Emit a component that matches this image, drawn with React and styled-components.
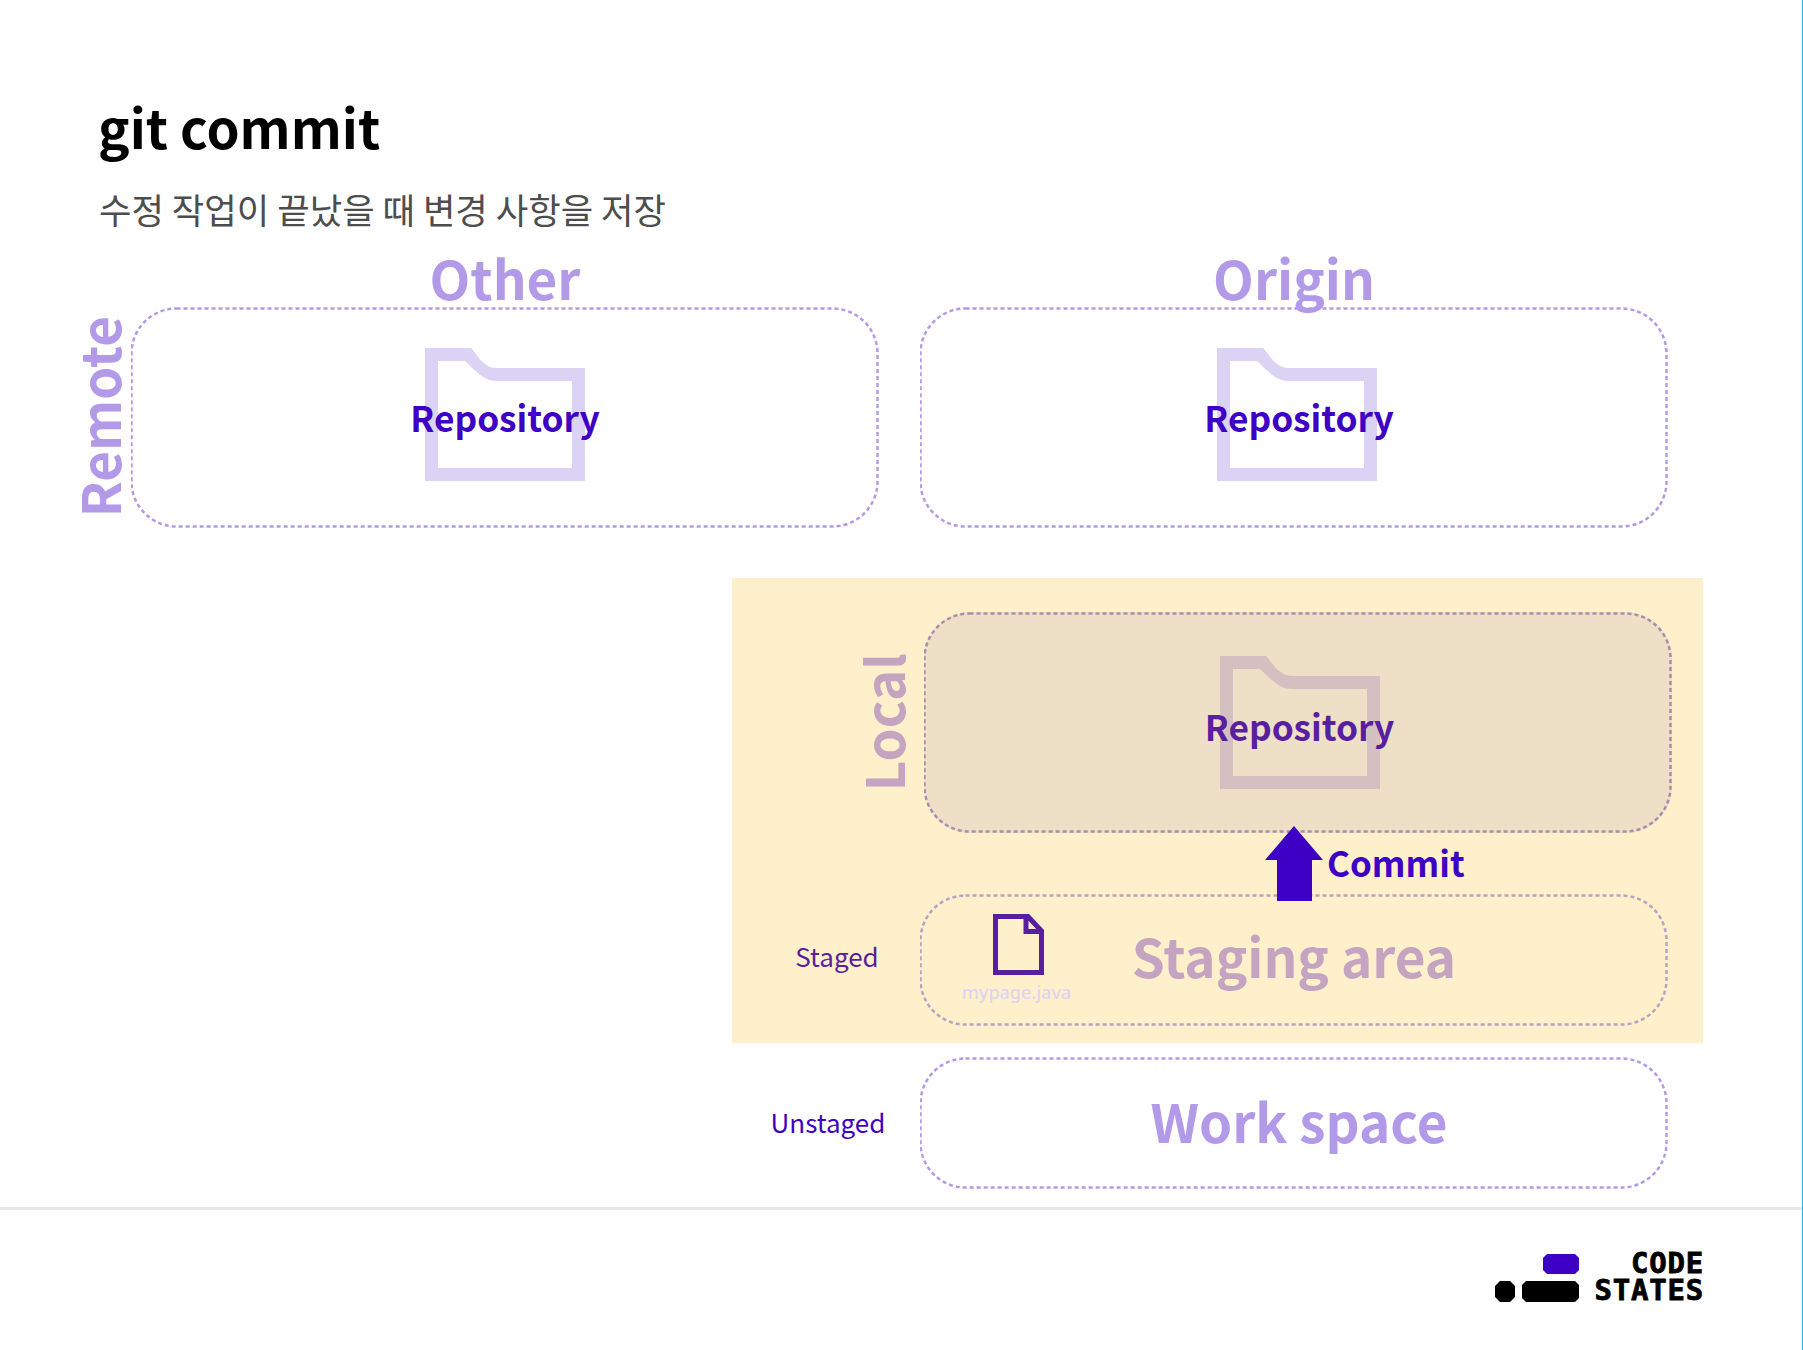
import React from "react"
import styled, { createGlobalStyle } from 'styled-components'

const purple = '#3d00c4'
const lilac = '#b29ae8'
const staged = '#5a1fa0'
const mauve = '#c4a4c0'

const GlobalStyle = createGlobalStyle`
  html, body {
    margin: 0;
    padding: 0;
    background: #fff;
  }
  body {
    font-family: "Noto Sans CJK KR", "Noto Sans", sans-serif;
  }
`

const Folder = ({ color, $lift }) => (
  <FolderIcon $lift={$lift} width="160" height="133" viewBox="0 0 160 133">
    <path
      fill={color}
      fillRule="evenodd"
      d="M0 0H46C52 6 58 20 72 20H160V133H0ZM13 13V120H147V33H72C58 33 50 22 40 13Z"
    />
  </FolderIcon>
)

const FileIcon = () => (
  <svg width="51" height="61" viewBox="0 0 51 61">
    <path
      fill="none"
      stroke={staged}
      strokeWidth="5"
      d="M2.5 2.5H35L48.5 17V58.5H2.5ZM33 3V17.5H48"
    />
  </svg>
)

const Arrow = () => (
  <ArrowIcon width="58" height="75" viewBox="0 0 58 75">
    <path fill={purple} d="M29 0L58 34H47V75H12V34H0Z" />
  </ArrowIcon>
)

const Dashes = ({ color }) => (
  <DashFrame>
    <DashRect rx="45" fill="none" stroke={color} strokeWidth="2.5" strokeDasharray="4 3" x="0.5" y="1.5" />
  </DashFrame>
)

const Logo = () => (
  <LogoWrap>
    <LogoMark width="84" height="49" viewBox="0 0 84 49">
      <path fill={purple} d="M52 0H80L84 4V16L80 20H52L48 16V4Z" />
      <path fill="#000" d="M5 27H15L20 32V43L15 48H5L0 43V32Z" />
      <path fill="#000" d="M31 27H80L84 31V44L80 48H31L27 44V31Z" />
    </LogoMark>
    <LogoText>
      <span>CODE</span>
      <span>STATES</span>
    </LogoText>
  </LogoWrap>
)

const App = () => (
  <Page>
    <GlobalStyle />
    <Slide>
      <Title>git commit</Title>
      <Subtitle>수정 작업이 끝났을 때 변경 사항을 저장</Subtitle>

      <RemoteRow>
        <SideLabel>Remote</SideLabel>
        <RemoteColumn>
          <ColumnTitle>Other</ColumnTitle>
          <RepoBox>
            <Dashes color={lilac} />
            <Folder color="#dad3f4" $lift />
            <RepoName>Repository</RepoName>
          </RepoBox>
        </RemoteColumn>
        <RemoteColumn>
          <ColumnTitle>Origin</ColumnTitle>
          <RepoBox $folderShift={6}>
            <Dashes color={lilac} />
            <Folder color="#dad3f4" $lift />
            <RepoName $shift={10}>Repository</RepoName>
          </RepoBox>
        </RemoteColumn>
      </RemoteRow>

      <LocalPanel>
        <LocalRow>
          <SideLabel $local>Local</SideLabel>
          <RepoBox $local $folderShift={4}>
            <Dashes color="#a68fae" />
            <Folder color="#d4c0c0" />
            <RepoName $local $shift={3}>Repository</RepoName>
          </RepoBox>
        </LocalRow>
        <CommitGap>
          <Arrow />
          <CommitLabel>Commit</CommitLabel>
        </CommitGap>
        <AreaRow>
          <AreaLabel $local>Staged</AreaLabel>
          <AreaBox>
            <Dashes color="#b9a0c4" />
            <FileItem>
              <FileIcon />
              <FileName>mypage.java</FileName>
            </FileItem>
            <AreaName $local>Staging area</AreaName>
          </AreaBox>
        </AreaRow>
      </LocalPanel>

      <WorkRow>
        <AreaLabel>Unstaged</AreaLabel>
        <AreaBox>
          <Dashes color={lilac} />
          <AreaName>Work space</AreaName>
        </AreaBox>
      </WorkRow>
    </Slide>
    <Footer>
      <Logo />
    </Footer>
  </Page>
)

const Page = styled.div`
  width: 1802px;
  height: 1350px;
  border-right: 1px solid #1cb4f0;
  display: flex;
  flex-direction: column;
  overflow: hidden;
`

const Slide = styled.main`
  height: 1207px;
  box-sizing: border-box;
  padding-top: 86px;
`

const Title = styled.h1`
  margin: 0 0 0 98px;
  font-size: 53px;
  line-height: 80px;
  font-weight: 700;
  color: #000;
`

const Subtitle = styled.p`
  margin: 18px 0 0 99px;
  font-size: 35.3px;
  line-height: 50px;
  font-weight: 400;
  color: #4d4d4d;
`

const RemoteRow = styled.section`
  display: flex;
  gap: 41px;
  padding-left: 131px;
  position: relative;
  margin-top: 8px;
`

const SideLabel = styled.div`
  position: absolute;
  left: ${p => (p.$local ? '122px' : '70px')};
  bottom: ${p => (p.$local ? '42px' : '11px')};
  writing-mode: vertical-rl;
  transform: rotate(180deg);
  font-size: 53px;
  line-height: 56px;
  font-weight: 700;
  color: ${p => (p.$local ? mauve : lilac)};
`

const RemoteColumn = styled.div`
  width: 748px;
  display: flex;
  flex-direction: column;
`

const ColumnTitle = styled.h2`
  margin: 0 0 -5px;
  text-align: center;
  font-size: 53px;
  line-height: 70px;
  font-weight: 700;
  color: ${lilac};
`

const RepoBox = styled.div`
  width: 748px;
  height: 221px;
  border-radius: 46px;
  background: ${p => (p.$local ? '#eedfc7' : 'transparent')};
  position: relative;
  display: flex;
  align-items: center;
  justify-content: center;
  box-sizing: border-box;
  padding-left: ${p => p.$folderShift || 0}px;
`

const DashFrame = styled.svg`
  position: absolute;
  inset: 0;
  width: 100%;
  height: 100%;
  pointer-events: none;
`

const DashRect = styled.rect`
  width: calc(100% - 2px);
  height: calc(100% - 3px);
`

const FolderIcon = styled.svg`
  display: block;
  margin-top: ${p => (p.$lift ? '-7px' : '0')};
`

const RepoName = styled.span`
  position: absolute;
  left: 0;
  right: 0;
  top: 50%;
  margin-top: ${p => (p.$local ? '-23px' : '-27px')};
  padding-left: ${p => p.$shift || 0}px;
  text-align: center;
  font-size: 35.3px;
  line-height: 52px;
  font-weight: 700;
  color: ${p => (p.$local ? staged : purple)};
`

const LocalPanel = styled.section`
  position: relative;
  margin: 50px 0 0 732px;
  width: 971px;
  height: 465px;
  box-sizing: border-box;
  padding-top: 34px;
  background: #fff0cc;
`

const LocalRow = styled.div`
  position: relative;
  padding-left: 192px;
`

const CommitGap = styled.div`
  position: relative;
  height: 61px;
`

const ArrowIcon = styled.svg`
  position: absolute;
  left: 533px;
  top: -7px;
  z-index: 2;
`

const CommitLabel = styled.span`
  position: absolute;
  left: 595px;
  top: 3px;
  font-size: 35px;
  line-height: 52px;
  font-weight: 700;
  color: ${purple};
`

const AreaRow = styled.div`
  display: flex;
  align-items: center;
`

const WorkRow = styled(AreaRow)`
  margin: 14px 0 0 732px;
`

const AreaLabel = styled.span`
  width: 188px;
  flex: none;
  box-sizing: border-box;
  padding-left: ${p => (p.$local ? '22px' : '4px')};
  margin-top: ${p => (p.$local ? '-10px' : '-4px')};
  text-align: center;
  font-size: 26px;
  font-weight: 400;
  color: ${p => (p.$local ? staged : purple)};
`

const AreaBox = styled.div`
  width: 748px;
  height: 132px;
  position: relative;
  display: flex;
  align-items: center;
  justify-content: center;
`

const AreaName = styled.span`
  font-size: 53px;
  line-height: 70px;
  font-weight: 700;
  margin-top: ${p => (p.$local ? '-11px' : '-7px')};
  padding-left: ${p => (p.$local ? '0' : '10px')};
  color: ${p => (p.$local ? mauve : lilac)};
`

const FileItem = styled.div`
  position: absolute;
  left: 44px;
  top: 20px;
  width: 108px;
  display: flex;
  flex-direction: column;
  align-items: center;
`

const FileName = styled.span`
  font-family: "Noto Sans", sans-serif;
  font-size: 18px;
  line-height: 26px;
  font-weight: 500;
  color: #ddd4f2;
  white-space: nowrap;
  margin: 4px 0 0 -3px;
`

const Footer = styled.footer`
  height: 143px;
  border-top: 3px solid #e8e8e8;
  box-sizing: border-box;
  display: flex;
  justify-content: flex-end;
  padding: 42px 98px 0 0;
`

const LogoWrap = styled.div`
  display: flex;
  gap: 15px;
  height: 52px;
`

const LogoMark = styled.svg`
  margin-top: 2px;
`

const LogoText = styled.div`
  display: flex;
  flex-direction: column;
  align-items: flex-end;
  font-family: "DejaVu Sans Mono", monospace;
  font-size: 29px;
  line-height: 27px;
  letter-spacing: 0.8px;
  font-weight: 700;
  color: #000;
  -webkit-text-stroke: 0.8px #000;
  margin-top: -2px;
`

export default App
